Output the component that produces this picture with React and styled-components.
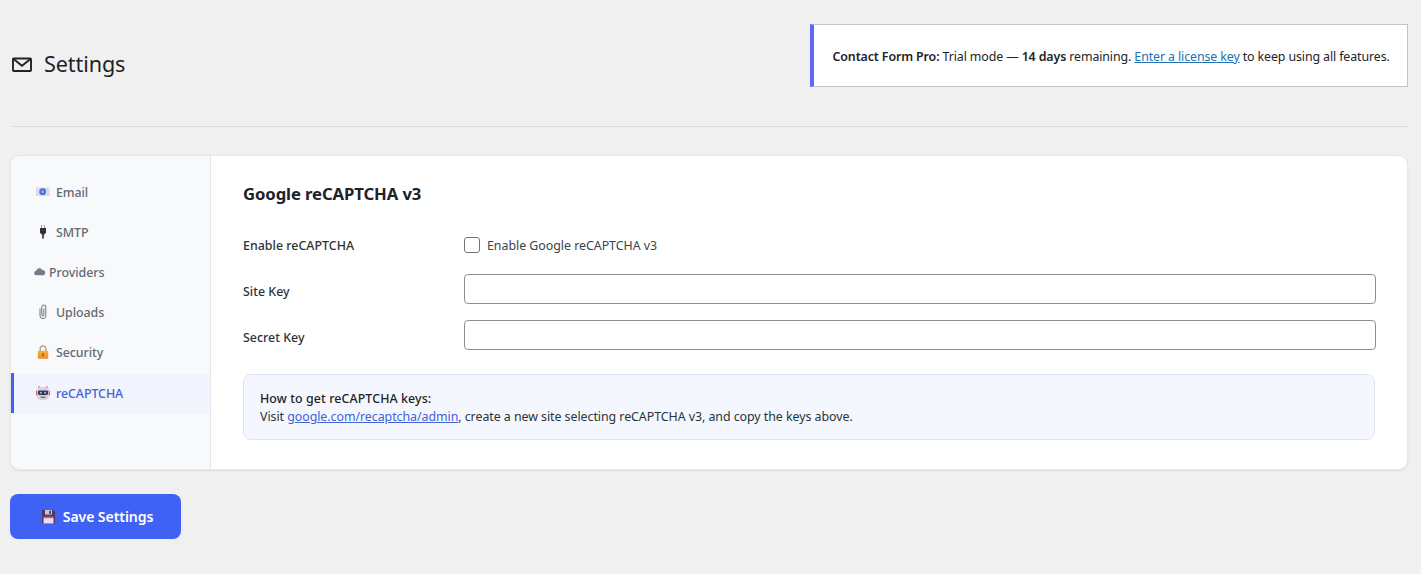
import React from "react";
import styled, { createGlobalStyle } from "styled-components";

const Global = createGlobalStyle`
  html, body { margin: 0; padding: 0; background: #f0f0f1; }
  body { font-family: "Noto Sans", "Open Sans", sans-serif; color: #1d2327; font-size: 13px; }
`;
const Page = styled.div`
  padding: 24px 13px 33px 10px;
  width: 1398px;
`;
const Header = styled.header`
  display: flex;
  justify-content: space-between;
  align-items: stretch;
  height: 63px;
  margin-bottom: 39px;
  padding-left: 2px;
`;
const TitleBox = styled.div`
  display: flex;
  align-items: center;
  gap: 12px;
  height: 78px;
  margin-top: 1px;
`;
const Title = styled.h1`
  margin: 0;
  font-size: 21.6px;
  font-weight: 400;
  color: #1d2327;
  line-height: 30px;
  letter-spacing: -0.1px;
`;
const Notice = styled.div`
  box-sizing: border-box;
  width: 598px;
  height: 63px;
  background: #fff;
  border: 1px solid #c3c4c7;
  border-left: 4px solid #6366f1;
  display: flex;
  align-items: center;
  padding: 2px 0 0 18.5px;
  font-size: 12.4px;
  letter-spacing: -0.11px;
  color: #1d2327;
  white-space: nowrap;
  b { font-weight: 600; }
  a { color: #2271b1; text-decoration: underline; }
`;
const Divider = styled.hr`
  margin: 0 0 28px 2px;
  border: 0;
  border-top: 1px solid #dcdcde;
`;
const Card = styled.div`
  display: flex;
  height: 313px;
  background: #fff;
  border: 1px solid #e5e7eb;
  border-radius: 10px;
  box-shadow: 0 1px 2px rgba(0,0,0,.08);
  overflow: hidden;
`;
const Sidebar = styled.nav`
  width: 199px;
  flex: none;
  background: #f8f9fb;
  border-right: 1px solid #e5e7eb;
  padding-top: 16px;
  display: flex;
  flex-direction: column;
`;
const Tab = styled.div`
  height: 40px;
  display: flex;
  align-items: center;
  gap: ${p => p.$gap ?? 6}px;
  padding-left: ${p => p.$pad ?? 22}px;
  box-sizing: border-box;
  font-size: 12.4px;
  font-weight: 500;
  letter-spacing: -0.05px;
  color: ${p => (p.$active ? "#4361d8" : "#646970")};
  background: ${p => (p.$active ? "#f1f4fc" : "transparent")};
  border-left: 3px solid ${p => (p.$active ? "#4361ee" : "transparent")};
  margin-top: ${p => (p.$active ? 1 : 0)}px;
`;
const Main = styled.main`
  flex: 1;
  padding: 26px 31px 0 32px;
  min-width: 0;
`;
const Heading = styled.h2`
  margin: 0 0 22px;
  font-size: 16.7px;
  line-height: 24px;
  font-weight: 700;
  color: #1d2327;
  letter-spacing: -0.1px;
`;
const Row = styled.div`
  display: grid;
  grid-template-columns: 221px 1fr;
  align-items: center;
  height: ${p => p.$h}px;
  margin-bottom: ${p => p.$mb ?? 0}px;
`;
const Label = styled.label`
  font-size: 12.4px;
  font-weight: 500;
  color: #2c3338;
  letter-spacing: 0.02px;
  padding-top: ${p => p.$nudge ?? 0}px;
`;
const CheckLine = styled.label`
  display: flex;
  align-items: center;
  gap: 7px;
  font-size: 12.4px;
  letter-spacing: -0.03px;
  color: #3c434a;
`;
const Check = styled.span`
  width: 14px;
  height: 14px;
  border: 1px solid #767676;
  border-radius: 3px;
  background: #fff;
  display: inline-block;
`;
const Input = styled.input`
  box-sizing: border-box;
  width: 912px;
  height: 30px;
  border: 1px solid #8c8f94;
  border-radius: 4px;
  background: #fff;
  padding: 0 8px;
  display: block;
`;
const Help = styled.div`
  box-sizing: border-box;
  width: 1132px;
  height: 66px;
  margin-top: 24px;
  padding: 15px 16px 0;
  background: #f4f7fe;
  border: 1px solid #dfe4f5;
  border-radius: 8px;
  font-size: 12.4px;
  line-height: 18px;
  letter-spacing: -0.05px;
  color: #2c3338;
  b { font-weight: 500; color: #1d2327; display: block; letter-spacing: 0.1px; }
  a { color: #4361d8; text-decoration: underline; }
`;
const SaveBtn = styled.button`
  margin-top: 24px;
  width: 171px;
  height: 45px;
  display: flex;
  align-items: center;
  justify-content: center;
  gap: 7px;
  padding: 0 0 0 3px;
  background: #3f62f5;
  color: #fff;
  border: 0;
  border-radius: 8px;
  font-family: inherit;
  font-size: 14.1px;
  font-weight: 600;
  letter-spacing: -0.1px;
`;

const MailIcon = () => (
  <svg width="20" height="15" viewBox="0 0 20 15" fill="none" stroke="#1d2327" strokeWidth="1.9">
    <rect x="1" y="1.5" width="18" height="12.5" rx="0.8" />
    <path d="M1.5 2l8.5 6.8L18.5 2" />
  </svg>
);
const Ico = styled.svg`
  flex: none;
  display: block;
`;
const EmailEmoji = () => (
  <Ico width="14" height="14" viewBox="0 0 14 14">
    <rect x="0" y="2.5" width="13.5" height="8.5" fill="#dcdbea" />
    <circle cx="6.7" cy="6.7" r="3.4" fill="#4a72e0" />
    <circle cx="6.7" cy="6.7" r="1.2" fill="#a9bdf0" />
  </Ico>
);
const PlugEmoji = () => (
  <Ico width="14" height="14" viewBox="0 0 14 14">
    <path d="M5 0h1v3.4H5zM8 0h1v3.4H8z" fill="#b79a4a" />
    <path d="M4 3h6v4.4L8.4 9.6H5.6L4 7.4z" fill="#2c3038" />
    <rect x="6.2" y="9" width="1.6" height="4.6" fill="#2c3038" />
  </Ico>
);
const CloudEmoji = () => (
  <Ico width="12" height="10" viewBox="0 0 12 10">
    <path d="M2.5 8.2a2.2 2.2 0 0 1-.3-4.4A3.3 3.3 0 0 1 8.4 3a2.7 2.7 0 0 1 1.2 5.2z" fill="#757c88" />
  </Ico>
);
const ClipEmoji = () => (
  <Ico width="14" height="16" viewBox="0 0 14 16" fill="none" stroke="#62666e" strokeWidth="0.9">
    <path d="M4 4.5v7.2a2.9 2.9 0 0 0 5.8 0V3a2 2 0 0 0-4 0v8a1 1 0 0 0 2 0V4.5" />
  </Ico>
);
const LockEmoji = () => (
  <Ico width="14" height="14" viewBox="0 0 14 14">
    <defs>
      <linearGradient id="lockg" x1="0" y1="0" x2="0" y2="1">
        <stop offset="0" stopColor="#f7b23c" />
        <stop offset="1" stopColor="#ea8a2c" />
      </linearGradient>
    </defs>
    <path d="M4.2 6.5V3.9a2.8 2.8 0 0 1 5.6 0v2.6" fill="none" stroke="#b3a88f" strokeWidth="1.5" />
    <rect x="1.8" y="5.7" width="10.4" height="8.1" rx="1" fill="url(#lockg)" />
    <rect x="6.3" y="8.2" width="1.4" height="3" fill="#8a5a14" />
  </Ico>
);
const RobotEmoji = () => (
  <Ico width="14" height="14" viewBox="0 0 14 14">
    <rect x="0" y="4.5" width="2" height="5" rx=".6" fill="#d05a70" />
    <rect x="12" y="4.5" width="2" height="5" rx=".6" fill="#d05a70" />
    <circle cx="3.2" cy="1.2" r="1" fill="#d05a70" />
    <circle cx="10.8" cy="1.2" r="1" fill="#d05a70" />
    <rect x="1.2" y="1" width="11.6" height="13" rx="3.4" fill="#dccfe0" />
    <rect x="2" y="4.4" width="10" height="4.6" rx="1.4" fill="#2f3a52" />
    <circle cx="4.8" cy="6.7" r="1" fill="#8fd0f0" />
    <circle cx="9.2" cy="6.7" r="1" fill="#8fd0f0" />
    <rect x="4.5" y="10.6" width="5" height="1.2" fill="#6a5a72" />
  </Ico>
);
const FloppyEmoji = () => (
  <Ico width="15" height="15" viewBox="0 0 15 15">
    <path d="M1 1h11.5L14 2.5V14.5H1z" fill="#4b3b63" />
    <rect x="4" y="1" width="7" height="4.6" fill="#c9c5d4" />
    <rect x="8.2" y="1.7" width="1.8" height="3.2" fill="#4b3b63" />
    <rect x="2.5" y="7.5" width="10" height="1.6" fill="#e0527a" />
    <rect x="2.5" y="9.1" width="10" height="5.4" fill="#e9dcec" />
  </Ico>
);

export default function App() {
  return (
    <>
      <Global />
      <Page>
        <Header>
          <TitleBox>
            <MailIcon />
            <Title>Settings</Title>
          </TitleBox>
          <Notice>
            <span>
              <b>Contact Form Pro:</b> Trial mode — <b>14 days</b> remaining.{" "}
              <a href="#">Enter a license key</a> to keep using all features.
            </span>
          </Notice>
        </Header>
        <Divider />
        <Card>
          <Sidebar>
            <Tab><EmailEmoji />Email</Tab>
            <Tab><PlugEmoji />SMTP</Tab>
            <Tab $pad={20} $gap={3}><CloudEmoji />Providers</Tab>
            <Tab><ClipEmoji />Uploads</Tab>
            <Tab><LockEmoji />Security</Tab>
            <Tab $active><RobotEmoji />reCAPTCHA</Tab>
          </Sidebar>
          <Main>
            <Heading>Google reCAPTCHA v3</Heading>
            <Row $h={34} $mb={12}>
              <Label>Enable reCAPTCHA</Label>
              <CheckLine><Check />Enable Google reCAPTCHA v3</CheckLine>
            </Row>
            <Row $h={30} $mb={16}>
              <Label $nudge={4}>Site Key</Label>
              <Input />
            </Row>
            <Row $h={30}>
              <Label $nudge={4}>Secret Key</Label>
              <Input />
            </Row>
            <Help>
              <b>How to get reCAPTCHA keys:</b>
              Visit <a href="#">google.com/recaptcha/admin</a>, create a new site selecting reCAPTCHA v3, and copy the keys above.
            </Help>
          </Main>
        </Card>
        <SaveBtn><FloppyEmoji />Save Settings</SaveBtn>
      </Page>
    </>
  );
}
